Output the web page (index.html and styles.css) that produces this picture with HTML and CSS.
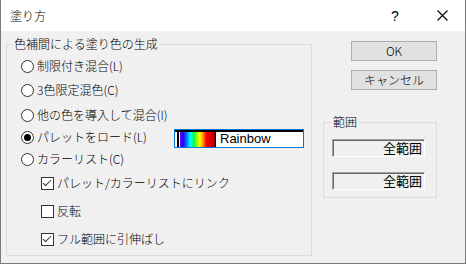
FILE: index.html
```html
<!DOCTYPE html>
<html>
<head>
   <meta charset="utf-8">
   <title>塗り方</title>
   <link rel="stylesheet" href="styles.css">
</head>
<body>
<div class="window">

   <!-- title bar -->
   <div class="titlebar">
      <span class="title">塗り方</span>
      <span class="help">?</span>
      <span class="close">
         <svg width="11" height="11" viewBox="0 0 11 11"><path d="M0.5 0.5 L10.5 10.5 M10.5 0.5 L0.5 10.5" stroke="#000" stroke-width="1.1" fill="none"/></svg>
      </span>
   </div>

   <div class="client">
      <fieldset class="group interp">
         <legend>色補間による塗り色の生成</legend>
         <div class="opt r1"><span class="radio"></span><span class="lbl">制限付き混合(L)</span></div>
         <div class="opt r2"><span class="radio"></span><span class="lbl">3色限定混色(C)</span></div>
         <div class="opt r3"><span class="radio"></span><span class="lbl">他の色を導入して混合(I)</span></div>
         <div class="opt r4">
            <span class="radio on"></span><span class="lbl wide">パレットをロード(L)</span>
            <div class="palette">
               <span class="swatch"></span>
               <span class="palname">Rainbow</span>
            </div>
         </div>
         <div class="opt r5"><span class="radio"></span><span class="lbl">カラーリスト(C)</span></div>
         <div class="opt sub c1"><span class="check on"></span><span class="lbl">パレット/カラーリストにリンク</span></div>
         <div class="opt sub c2"><span class="check"></span><span class="lbl">反転</span></div>
         <div class="opt sub c2"><span class="check on"></span><span class="lbl">フル範囲に引伸ばし</span></div>
      </fieldset>

      <div class="side">
         <button class="btn">OK</button>
         <button class="btn cancel">キャンセル</button>
         <fieldset class="group range">
            <legend>範囲</legend>
            <div class="field">全範囲</div>
            <div class="field second">全範囲</div>
         </fieldset>
      </div>
   </div>
</div>
</body>
</html>
```

FILE: styles.css
```css
body {
   margin: 0;
   padding: 0;
   background-color: #f0f0f0;
   font-family: "Noto Sans CJK JP", sans-serif;
   font-size: 12px;
   font-weight: 300;
   color: #000;
}

.window {
   width: 466px;
   height: 264px;
   box-sizing: border-box;
   border: 1px solid #7a7a7a;
   border-top: none;
   background-color: #f0f0f0;
   display: flex;
   flex-direction: column;
}

/* Title bar */
.titlebar {
   height: 31px;
   background-color: #fff;
   display: flex;
   align-items: center;
   flex-shrink: 0;
}
.titlebar .title {
   margin-left: 9px;
   flex: 1;
   line-height: 16px;
}
.titlebar .help {
   font-family: "Liberation Sans", sans-serif;
   font-size: 14px;
   width: 14px;
   margin-right: 32px;
}
.titlebar .close {
   display: flex;
   width: 11px;
   height: 11px;
   margin-right: 17px;
}

/* Client area */
.client {
   flex: 1;
   display: flex;
   align-items: flex-start;
}

fieldset.group {
   margin: 0;
   padding: 0;
   border: 1px solid #dcdcdc;
   min-width: 0;
}
fieldset.group legend {
   padding: 0 2px;
   line-height: 16px;
   height: 16px;
}

.interp {
   margin: 5px 0 0 5px !important;
   width: 306px;
   height: 220px;
   box-sizing: border-box;
}
.interp legend {
   margin-left: 5px;
}

.opt {
   display: flex;
   align-items: center;
   height: 22px;
   padding-left: 14px;
   line-height: 16px;
}
.opt.sub {
   padding-left: 34px;
}
.opt .lbl {
   margin-left: 3px;
}
.opt .lbl.wide {
   width: 137px;
}
.r1 { margin-top: 3px; }
.r2 { margin-top: 2px; }
.r3 { margin-top: 3px; }
.r4 { margin-top: 0; }
.r5 { margin-top: 0; }
.c1 { margin-top: 2px; }
.c2 { margin-top: 6px; }

.radio {
   width: 13px;
   height: 13px;
   box-sizing: border-box;
   border: 1px solid #333;
   border-radius: 50%;
   background-color: #fff;
   display: flex;
   align-items: center;
   justify-content: center;
   flex-shrink: 0;
}
.radio.on::after {
   content: "";
   width: 7px;
   height: 7px;
   border-radius: 50%;
   background-color: #000;
}

.check {
   width: 13px;
   height: 13px;
   box-sizing: border-box;
   border: 1px solid #333;
   background-color: #fff;
   flex-shrink: 0;
   position: relative;
}
.check.on::after {
   content: "";
   position: absolute;
   left: 3px;
   top: 0px;
   width: 3px;
   height: 7px;
   border-right: 1px solid #333;
   border-bottom: 1px solid #333;
   transform: rotate(45deg);
}

/* palette picker */
.palette {
   width: 130px;
   height: 19px;
   box-sizing: border-box;
   border: 1px solid #0078d7;
   margin-top: 3px;
   display: flex;
   background-color: #fff;
   box-shadow: inset 0 2px 0 #000;
   padding-top: 2px;
}
.palette .swatch {
   width: 35px;
   margin-left: 2px;
   border-left: 2px solid #000;
   border-right: 1px solid #000;
   padding-left: 1px;
   background-clip: content-box;
   background-image: linear-gradient(to right, #7f00ff, #2000ff 12%, #00a0ff 24%, #00ffff 32%, #00ff40 42%, #c0ff00 52%, #ffff00 58%, #ff9000 67%, #ff0000 76%, #e00000 88%, #900000);
}
.palette .palname {
   font-family: "Liberation Sans", sans-serif;
   font-weight: 400;
   font-size: 13px;
   line-height: 14px;
   margin-left: 4px;
}

/* right column */
.side {
   margin-left: 11px;
   width: 114px;
   display: flex;
   flex-direction: column;
   padding-top: 10px;
}
.btn {
   margin: 0 0 0 28px;
   width: 86px;
   height: 20px;
   padding: 0;
   border: 1px solid #adadad;
   background-color: #e1e1e1;
   font-family: "Noto Sans CJK JP", sans-serif;
   font-size: 12px;
   font-weight: 300;
   line-height: 16px;
   color: #000;
}
.btn.cancel {
   margin-top: 9px;
}

.range {
   margin-top: 24px !important;
   height: 84px;
   box-sizing: border-box;
}
.range legend {
   margin-left: 7px;
}
.field {
   margin: 9px 0 0 8px;
   width: 93px;
   height: 18px;
   box-sizing: border-box;
   border: 1px solid;
   border-color: #a0a0a0 #fff #fff #a0a0a0;
   box-shadow: inset 1px 1px 0 #696969;
   text-align: right;
   padding-right: 2px;
   font-size: 13px;
   font-weight: 400;
   line-height: 16px;
}
.field.second {
   margin-top: 15px;
}
```
